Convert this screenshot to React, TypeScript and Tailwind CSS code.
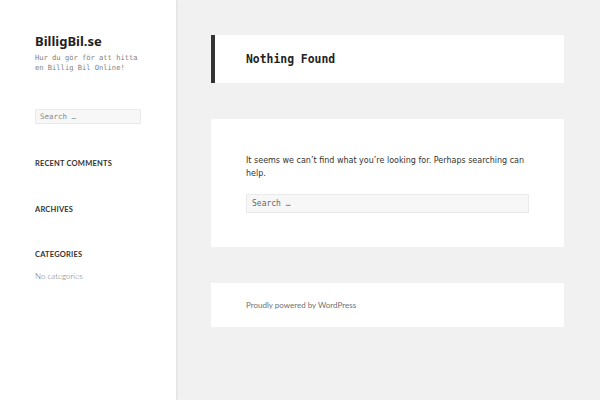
export default function App() {
  return (
    <div className="flex h-[400px] w-[600px] overflow-hidden bg-[#f1f1f1]">
      {/* Sidebar */}
      <aside className="w-[176px] shrink-0 bg-white px-[35px] pt-[32px] shadow-[1px_0_2px_rgba(0,0,0,0.08)]">
        <div className="font-['Noto_Sans',sans-serif] text-[13px] font-bold leading-[18px] text-[#222]">BilligBil.se</div>
        <p className="mt-[3px] font-['DejaVu_Sans_Mono',monospace] text-[7.1px] leading-[10px] text-[#808080]">
          Hur du gör för att hitta en Billig Bil Online!
        </p>
        <div className="mt-[36px] h-[15px] w-[106px] border border-[#eaeaea] bg-[#f7f7f7] px-[4px] font-['DejaVu_Sans_Mono',monospace] text-[7.5px] leading-[13px] text-[#888]">
          Search …
        </div>
        <h3 className="mt-[35px] font-['Lato',sans-serif] text-[7.5px] font-bold leading-[10px] tracking-[0.2px] text-[#333]">RECENT COMMENTS</h3>
        <h3 className="mt-[36px] font-['Lato',sans-serif] text-[7.5px] font-bold leading-[10px] tracking-[0.2px] text-[#333]">ARCHIVES</h3>
        <h3 className="mt-[35px] font-['Lato',sans-serif] text-[7.5px] font-bold leading-[10px] tracking-[0.2px] text-[#333]">CATEGORIES</h3>
        <p className="mt-[11px] font-['Lato',sans-serif] text-[8px] font-light leading-[10px] text-[#707070]">No categories</p>
      </aside>

      {/* Main */}
      <main className="flex-1 pl-[35px] pr-[36px] pt-[35px]">
        <div className="flex h-[48px] items-center border-l-4 border-[#333] bg-white pl-[31px]">
          <h1 className="pt-[1px] font-['DejaVu_Sans_Mono',monospace] text-[11.4px] font-bold text-[#222]">Nothing Found</h1>
        </div>

        <div className="mt-[36px] h-[128px] bg-white px-[35px] pt-[35px]">
          <p className="font-['DejaVu_Sans',sans-serif] text-[8px] leading-[13px] text-[#333]">
            It seems we can’t find what you’re looking for. Perhaps searching can help.
          </p>
          <div className="mt-[14px] h-[19px] w-[283px] border border-[#eaeaea] bg-[#f7f7f7] px-[5px] font-['DejaVu_Sans_Mono',monospace] text-[8px] leading-[17px] text-[#666]">
            Search …
          </div>
        </div>

        <div className="mt-[36px] flex h-[44px] items-center bg-white px-[35px]">
          <p className="font-['Lato',sans-serif] text-[8px] text-[#707070]">Proudly powered by WordPress</p>
        </div>
      </main>
    </div>
  );
}
